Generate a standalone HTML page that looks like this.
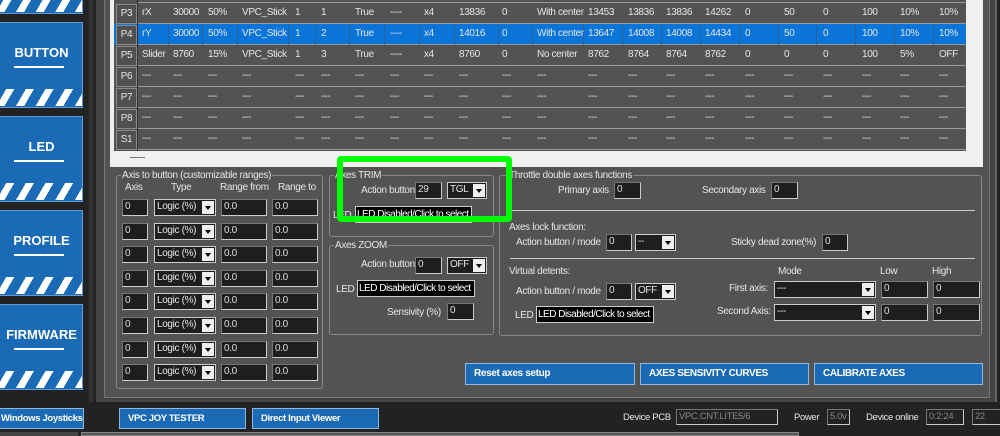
<!DOCTYPE html>
<html><head><meta charset="utf-8"><style>
*{margin:0;padding:0;box-sizing:border-box}
body{width:1000px;height:436px;overflow:hidden;background:#222;font-family:"Liberation Sans",sans-serif;font-size:10px;letter-spacing:-0.35px;color:#e6e6e6;position:relative}
.a{position:absolute;white-space:nowrap}
.side{position:absolute;left:0;width:83px;height:86px;background:#1b6ab5;border:1px solid #5d9ad6;border-left:none;overflow:hidden;letter-spacing:0}
.side .t{position:absolute;left:0;width:83px;top:22px;text-align:center;font-weight:bold;font-size:13px;color:#fff}
.side .u{position:absolute;left:14px;width:50px;top:43px;height:2px;background:#fff}
.side .s{position:absolute;left:0;bottom:1px;width:83px;height:17px;background:repeating-linear-gradient(-60deg,#fff 0 7px,#1b6ab5 7px 17px)}
.cell{position:absolute;height:21px;line-height:20px;white-space:nowrap;overflow:hidden}
.rh{position:absolute;left:116px;width:21px;height:20px;background:#505050;border:1px solid #8a8a8a;text-align:center;line-height:18px}
.grp{position:absolute;border:1px solid #888;border-radius:3px}
.lg{position:absolute;background:#535353;padding:0 1px;line-height:11px;top:-6px;white-space:nowrap}
.in{position:absolute;height:17px;background:#1e1e1e;border:1px solid #ccc;border-top-color:#777;border-left-color:#777;line-height:14px;padding-left:2px;color:#ddd;white-space:nowrap}
.sel{position:absolute;height:17px;background:#1e1e1e;border:1px solid #ccc;line-height:14px;padding-left:2px;white-space:nowrap}
.sel i{position:absolute;right:1px;top:1px;width:12px;height:13px;background:#eee}
.sel i:after{content:"";position:absolute;left:3px;top:5px;border:3px solid transparent;border-top:4px solid #000}
.bb{position:absolute;height:22px;background:#1b6ab5;border:1px solid #8fb8e0;color:#fff;font-weight:bold;font-size:10px;line-height:20px;padding-left:8px;white-space:nowrap;overflow:hidden}
.led{position:absolute;height:17px;background:#000;border:1px solid #ccc;color:#fff;line-height:15px;padding-left:1px;font-size:10px;letter-spacing:-0.5px;white-space:nowrap;overflow:hidden}
</style></head><body>
<div class="side" style="top:-72px"><div class="s"></div></div>
<div class="side" style="top:22px"><div class="t">BUTTON</div><div class="u"></div><div class="s"></div></div>
<div class="side" style="top:116px"><div class="t">LED</div><div class="u"></div><div class="s"></div></div>
<div class="side" style="top:210px"><div class="t">PROFILE</div><div class="u"></div><div class="s"></div></div>
<div class="side" style="top:304px"><div class="t">FIRMWARE</div><div class="u"></div><div class="s"></div></div>
<div class="a" style="left:89px;top:0;width:4px;height:402px;background:#333"></div>
<div class="a" style="left:96px;top:0;width:901px;height:402px;background:#444;border-right:2px solid #666"></div>
<div class="a" style="left:104px;top:0;width:886px;height:398px;background:#535353;border:1px solid #777;border-top:none"></div>
<div class="a" style="left:110px;top:0;width:873px;height:167px;background:#f0f0f0"></div>
<div class="a" style="left:114px;top:0;width:852px;height:151px;background:#535353"></div>
<div class="a" style="left:114px;top:24px;width:852px;height:21px;background:#0a74d8"></div>
<div class="a" style="left:130px;top:157px;width:15px;height:1px;background:#777"></div>
<div id="tb"></div>
<div class="grp" style="left:116px;top:175px;width:207px;height:214px"><div class="lg" style="left:4px">Axis to button (customizable ranges)</div></div>
<div class="a" style="left:125px;top:182px">Axis</div><div class="a" style="left:171px;top:182px">Type</div>
<div class="a" style="left:220px;top:182px">Range from</div><div class="a" style="left:278px;top:182px">Range to</div>
<div id="ab"></div>
<div class="grp" style="left:329px;top:175px;width:165px;height:62px"><div class="lg" style="left:4px">Axes TRIM</div></div>
<div class="a" style="left:361px;top:185px">Action button</div>
<div class="in" style="left:415px;top:182px;width:27px">29</div>
<div class="sel" style="left:447px;top:182px;width:40px">TGL<i></i></div>
<div class="a" style="left:333px;top:210px">LED</div>
<div class="led" style="left:355px;top:206px;width:117px">LED Disabled/Click to select</div>
<div class="grp" style="left:329px;top:245px;width:165px;height:90px"><div class="lg" style="left:4px">Axes ZOOM</div></div>
<div class="a" style="left:361px;top:259px">Action button</div>
<div class="in" style="left:415px;top:257px;width:27px">0</div>
<div class="sel" style="left:447px;top:257px;width:40px">OFF<i></i></div>
<div class="a" style="left:336px;top:284px">LED</div>
<div class="led" style="left:357px;top:280px;width:118px">LED Disabled/Click to select</div>
<div class="a" style="left:387px;top:307px">Sensivity (%)</div>
<div class="in" style="left:447px;top:303px;width:27px">0</div>
<div class="grp" style="left:499px;top:175px;width:483px;height:161px"><div class="lg" style="left:8px">Throttle double axes functions</div></div>
<div class="a" style="left:558px;top:185px">Primary axis</div><div class="in" style="left:614px;top:182px;width:27px">0</div>
<div class="a" style="left:702px;top:185px">Secondary axis</div><div class="in" style="left:771px;top:182px;width:27px">0</div>
<div class="a" style="left:510px;top:210px;width:465px;height:1px;background:#ccc"></div>
<div class="a" style="left:509px;top:222px">Axes lock function:</div>
<div class="a" style="left:516px;top:237px">Action button / mode</div>
<div class="in" style="left:606px;top:234px;width:26px">0</div>
<div class="sel" style="left:635px;top:234px;width:41px">--<i></i></div>
<div class="a" style="left:731px;top:237px">Sticky dead zone(%)</div>
<div class="in" style="left:822px;top:234px;width:26px">0</div>
<div class="a" style="left:510px;top:258px;width:465px;height:1px;background:#ccc"></div>
<div class="a" style="left:509px;top:266px">Virtual detents:</div>
<div class="a" style="left:778px;top:266px">Mode</div><div class="a" style="left:880px;top:266px">Low</div><div class="a" style="left:932px;top:266px">High</div>
<div class="a" style="left:516px;top:286px">Action button / mode</div>
<div class="in" style="left:606px;top:283px;width:26px">0</div>
<div class="sel" style="left:635px;top:283px;width:41px">OFF<i></i></div>
<div class="a" style="left:515px;top:310px">LED</div>
<div class="led" style="left:536px;top:306px;width:118px">LED Disabled/Click to select</div>
<div class="a" style="left:729px;top:283px">First axis:</div>
<div class="sel" style="left:774px;top:281px;width:102px">---<i></i></div>
<div class="in" style="left:881px;top:281px;width:47px">0</div><div class="in" style="left:933px;top:281px;width:47px">0</div>
<div class="a" style="left:717px;top:306px">Second Axis:</div>
<div class="sel" style="left:774px;top:304px;width:102px">---<i></i></div>
<div class="in" style="left:881px;top:304px;width:47px">0</div><div class="in" style="left:933px;top:304px;width:47px">0</div>
<div class="bb" style="left:465px;top:363px;width:170px">Reset axes setup</div>
<div class="bb" style="left:640px;top:363px;width:169px">AXES SENSIVITY CURVES</div>
<div class="bb" style="left:814px;top:363px;width:169px">CALIBRATE AXES</div>
<div class="bb" style="left:-8px;top:408px;width:92px;height:21px;font-size:9.5px;line-height:19px">Windows Joysticks</div>
<div class="bb" style="left:119px;top:408px;width:127px;height:21px;font-size:9.5px;line-height:19px">VPC JOY TESTER</div>
<div class="bb" style="left:252px;top:408px;width:127px;height:21px;font-size:9.5px;line-height:19px">Direct Input Viewer</div>
<div class="a" style="left:623px;top:412px;font-size:9.5px">Device PCB</div>
<div class="in" style="left:676px;top:409px;width:102px;height:16px;background:#222;color:#888;font-size:9.5px">VPC.CNT.LITE5/6</div>
<div class="a" style="left:794px;top:412px;font-size:9.5px">Power</div>
<div class="in" style="left:827px;top:409px;width:23px;height:16px;background:#222;color:#888;font-size:9.5px">5.0v</div>
<div class="a" style="left:866px;top:412px;font-size:9.5px">Device online</div>
<div class="in" style="left:926px;top:409px;width:38px;height:16px;background:#222;color:#888;font-size:9.5px">0:2:24</div>
<div class="in" style="left:972px;top:409px;width:30px;height:16px;background:#222;color:#888;font-size:9.5px">22</div>
<div class="a" style="left:0;top:432px;width:78px;height:4px;background:#444"></div>
<div class="a" style="left:81px;top:432px;width:718px;height:4px;background:#555;border:1px solid #888"></div>
<div class="a" style="left:337px;top:156px;width:175px;height:66px;border:6px solid #00ff00;border-radius:4px"></div>
<script>
var cols=[142,173,208,242,295,321,355,390,424,459,502,537,588,628,666,705,745,784,823,862,900,939];
var bords=[168,202,237,288,315,349,384,419,454,498,532,583,622,661,700,739,778,816,855,894,933];
var rows=[["P3",["rX","30000","50%","VPC_Stick","1","1","True","----","x4","13836","0","With center","13453","13836","13836","14262","0","50","0","100","10%","10%"]],
["P4",["rY","30000","50%","VPC_Stick","1","2","True","----","x4","14016","0","With center","13647","14008","14008","14434","0","50","0","100","10%","10%"]],
["P5",["Slider","8760","15%","VPC_Stick","1","3","True","----","x4","8760","0","No center","8762","8764","8764","8762","0","0","0","100","5%","OFF"]]];
["P6","P7","P8","S1"].forEach(function(p){var a=[];for(var i=0;i<22;i++)a.push("---");rows.push([p,a]);});
var h="";
rows.forEach(function(r,ri){var y=3+ri*21;
h+='<div class="rh" style="top:'+(y+1)+'px">'+r[0]+'</div>';
h+='<div class="a" style="left:137px;top:'+(y+20)+'px;width:829px;height:1px;background:#9a9a9a"></div>';
if(ri==1)bords.forEach(function(b){h+='<div class="a" style="left:'+b+'px;top:24px;width:1px;height:21px;background:#2a5f99"></div>';});
r[1].forEach(function(t,i){var w=(i<21?cols[i+1]-cols[i]-2:24);h+='<div class="cell" style="left:'+cols[i]+'px;top:'+y+'px;width:'+w+'px">'+t+'</div>';});});
h+='<div class="a" style="left:137px;top:2px;width:829px;height:1px;background:#9a9a9a"></div>';
h+='<div class="a" style="left:137px;top:0;width:1px;height:151px;background:#333"></div>';
document.getElementById("tb").innerHTML=h;
var g="";
for(var i=0;i<8;i++){var y=199+i*23.6;
g+='<div class="in" style="left:122px;top:'+y+'px;width:26px">0</div>';
g+='<div class="sel" style="left:154px;top:'+y+'px;width:62px">Logic (%)<i></i></div>';
g+='<div class="in" style="left:221px;top:'+y+'px;width:46px">0.0</div>';
g+='<div class="in" style="left:272px;top:'+y+'px;width:46px">0.0</div>';}
document.getElementById("ab").innerHTML=g;
</script>
</body></html>
